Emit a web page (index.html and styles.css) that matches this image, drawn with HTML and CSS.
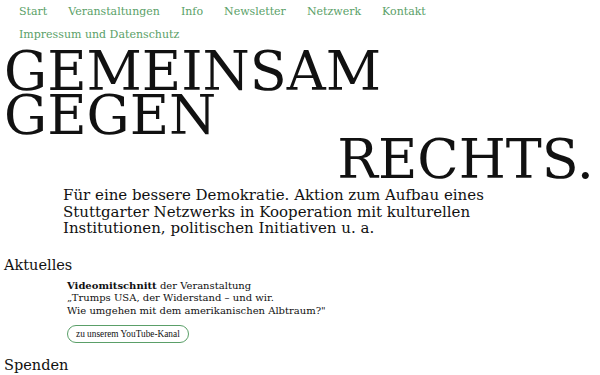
FILE: index.html
```html
<!DOCTYPE html>
<html lang="de">
<head>
<meta charset="utf-8">
<title>Gemeinsam gegen Rechts</title>
<link rel="stylesheet" href="styles.css">
</head>
<body>
<nav class="nav">
  <a href="#">Start</a>
  <a href="#">Veranstaltungen</a>
  <a href="#">Info</a>
  <a href="#">Newsletter</a>
  <a href="#">Netzwerk</a>
  <a href="#">Kontakt</a>
  <a href="#">Impressum und Datenschutz</a>
</nav>
<header class="hero">
  <h1 class="title"><span class="line">GEMEINSAM</span><span class="line">GEGEN</span><span class="line right">RECHTS.</span></h1>
  <p class="lead">Für eine bessere Demokratie. Aktion zum Aufbau eines Stuttgarter Netzwerks in Kooperation mit kulturellen Institutionen, politischen Initiativen u. a.</p>
</header>
<section class="section news-section">
  <h2 class="heading">Aktuelles</h2>
  <div class="news">
    <p class="news-text"><strong>Videomitschnitt</strong> der Veranstaltung<br>„Trumps USA, der Widerstand – und wir.<br>Wie umgehen mit dem amerikanischen Albtraum?"</p>
    <a class="pill" href="#">zu unserem YouTube-Kanal</a>
  </div>
</section>
<section class="section donate-section">
  <h2 class="heading">Spenden</h2>
</section>
</body>
</html>
```
FILE: styles.css
```css
html, body {
  margin: 0;
  padding: 0;
  background: #ffffff;
}
body {
  font-family: "DejaVu Serif", serif;
  color: #111;
  padding: 0 6px 0 4px;
}
.nav {
  display: flex;
  flex-wrap: wrap;
  column-gap: 21px;
  padding: 0 0 0 15px;
  max-width: 560px;
}
.nav a {
  color: #5a9f68;
  text-decoration: none;
  font-size: 11px;
  line-height: 23px;
}
.title {
  margin: 0;
  font-weight: normal;
  font-size: 54px;
  line-height: 44px;
  display: flex;
  flex-direction: column;
  padding-top: 4px;
}
.title .right {
  align-self: flex-end;
}
.lead {
  margin: 5px 0 0 59px;
  font-size: 15px;
  line-height: 16.5px;
  max-width: 450px;
}
.heading {
  margin: 0;
  font-weight: normal;
  font-size: 14.5px;
  line-height: 20px;
}
.news-section {
  margin-top: 18px;
}
.donate-section {
  margin-top: 12px;
}
.news {
  padding-left: 63px;
  padding-top: 5px;
}
.news-text {
  margin: 0;
  font-size: 10px;
  line-height: 12.5px;
}
.pill {
  display: inline-block;
  margin-top: 8px;
  border: 1px solid #5a9f68;
  border-radius: 9px;
  padding: 3px 8px;
  font-family: "Liberation Serif", serif;
  font-size: 9.3px;
  line-height: 10px;
  color: #111;
  text-decoration: none;
}
```
